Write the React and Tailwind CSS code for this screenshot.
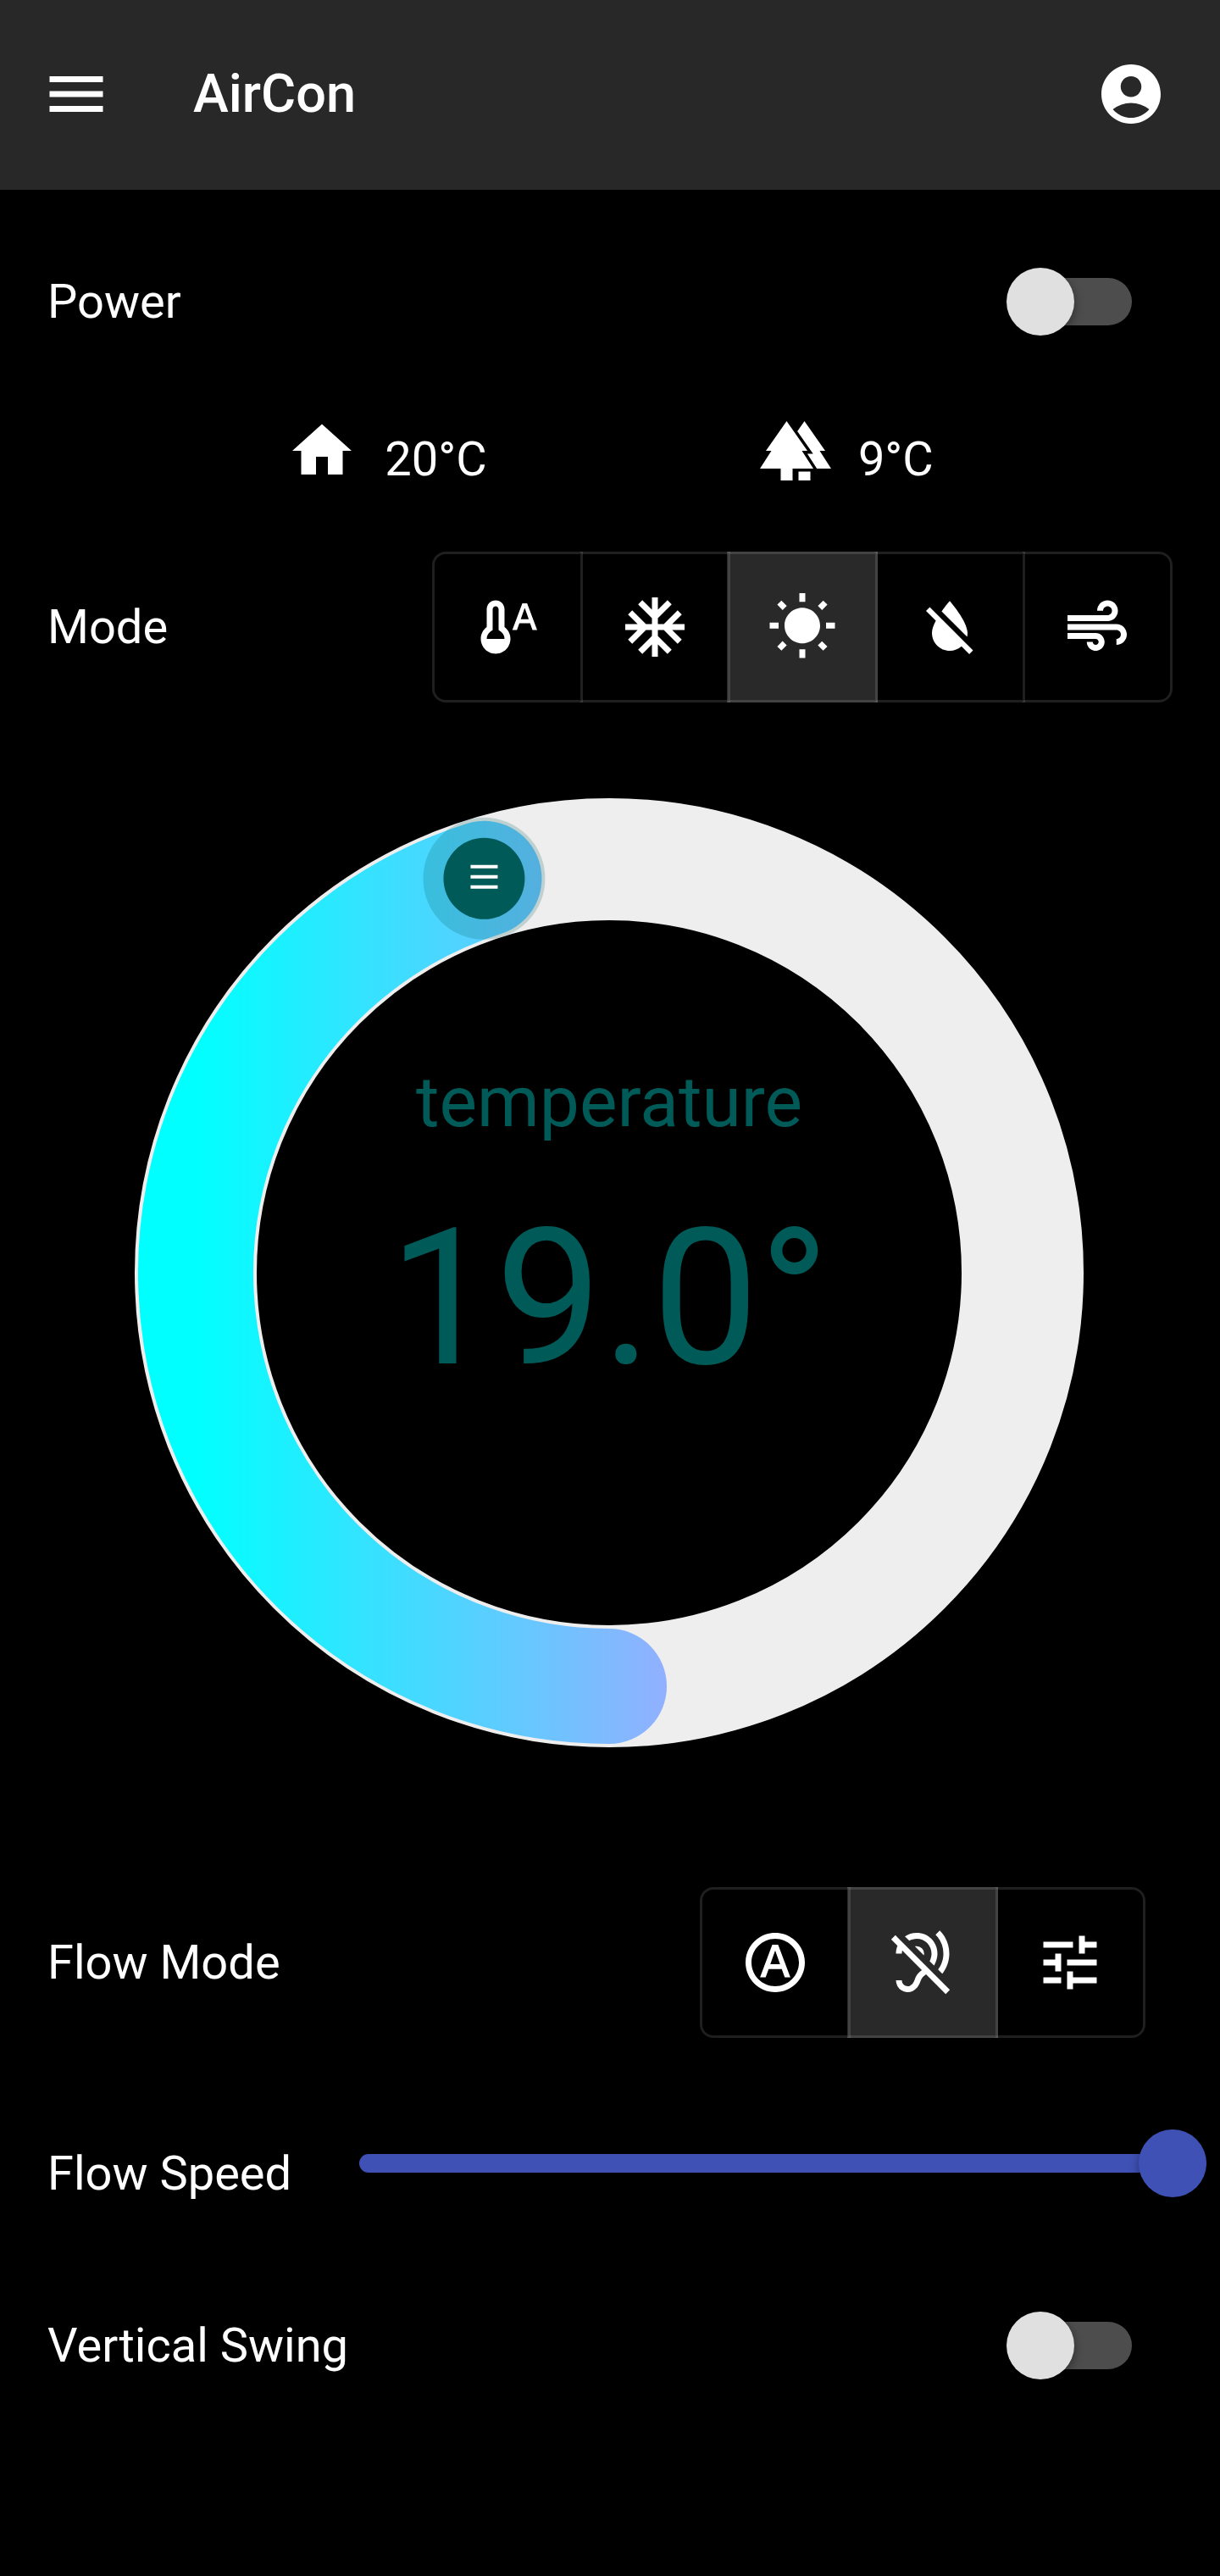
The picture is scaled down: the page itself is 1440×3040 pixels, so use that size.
import { useState } from "react";
import {
  MdAcUnit,
  MdAccountCircle,
  MdAir,
  MdForest,
  MdFormatColorReset,
  MdHearingDisabled,
  MdHome,
  MdMenu,
  MdOutlineHdrAuto,
  MdThermostatAuto,
  MdTune,
  MdWbSunny,
} from "react-icons/md";

const ICON = "size-[84px] shrink-0";

const MODES = [
  { id: "auto", label: "Automatic", Icon: MdThermostatAuto },
  { id: "cool", label: "Cool", Icon: MdAcUnit },
  { id: "heat", label: "Heat", Icon: MdWbSunny },
  { id: "dry", label: "Dry", Icon: MdFormatColorReset },
  { id: "fan", label: "Fan", Icon: MdAir },
];

const FLOW_MODES = [
  { id: "auto", label: "Automatic flow", Icon: MdOutlineHdrAuto },
  { id: "quiet", label: "Quiet", Icon: MdHearingDisabled },
  { id: "manual", label: "Manual", Icon: MdTune },
];

function ToggleGroup({ labelledBy, options, value, onChange }) {
  return (
    <div role="group" aria-labelledby={labelledBy} className="flex">
      {options.map(({ id, label, Icon }) => (
        <button
          key={id}
          type="button"
          aria-label={label}
          aria-pressed={value === id}
          onClick={() => onChange(id)}
          className={
            "-ml-1 border-[3px] border-l-transparent border-y-white/12 border-r-white/12 p-11 first:ml-0 first:rounded-l-2xl first:border-l-white/12 last:rounded-r-2xl " +
            (value === id ? "bg-white/16" : "")
          }
        >
          <Icon className={ICON} />
        </button>
      ))}
    </div>
  );
}

function SwitchRow({ id, label, checked, onChange }) {
  return (
    <div className="flex items-center justify-between py-[34px] pr-[104px] pl-14">
      <label htmlFor={id}>{label}</label>
      <input
        id={id}
        type="checkbox"
        role="switch"
        checked={checked}
        onChange={(e) => onChange(e.target.checked)}
        className="relative h-14 w-[136px] shrink-0 appearance-none rounded-full bg-[#4d4d4d] before:absolute before:-top-3 before:-left-3 before:size-20 before:rounded-full before:bg-[#e0e0e0] before:shadow-[0_4px_12px_rgba(0,0,0,0.4)] checked:bg-[#3f51b5] checked:before:left-17"
      />
    </div>
  );
}

const MIN = 16;
const MAX = 26;

/* Drawn in a 280-unit square: ring 36 wide, centre line at radius 122.
   The arc starts at the bottom and runs clockwise. */
function Dial({ value, onChange }) {
  const sweep = 54.4 + (value - MIN) * 36;
  const shown = Math.min(sweep, 359);
  const angle = ((90 + shown) * Math.PI) / 180;
  const x = 140 + 122 * Math.cos(angle);
  const y = 140 + 122 * Math.sin(angle);
  const large = shown > 180 ? 1 : 0;
  return (
    <div className="mx-auto grid w-[1120px] max-w-full">
      <svg viewBox="0 0 280 280" className="w-full [grid-area:1/1]" aria-hidden="true">
        <defs>
          <linearGradient id="progress" gradientUnits="userSpaceOnUse" x1="18" y1="0" x2="262" y2="0">
            <stop offset="0" stopColor="#00ffff" />
            <stop offset="1" stopColor="#ff74ff" />
          </linearGradient>
        </defs>
        <circle cx="140" cy="140" r="122" fill="none" stroke="#eeeeee" strokeWidth="36" />
        <path
          d={`M140 262A122 122 0 ${large} 1 ${x} ${y}`}
          fill="none"
          stroke="url(#progress)"
          strokeWidth="34"
          strokeLinecap="round"
        />
        <g transform={`translate(${x - 18} ${y - 18})`}>
          <circle cx="18" cy="18" r="18" fill="#005a58" fillOpacity="0.2" />
          <circle cx="18" cy="18" r="12" fill="#005a58" />
          <path d="M14 14h8v1h-8zM14 17h8v1h-8zM14 20h8v1h-8z" fill="#ffffff" />
        </g>
      </svg>
      <div className="flex flex-col items-center gap-11 pt-[303px] text-[#005a58] [grid-area:1/1]">
        <label htmlFor="temperature" className="text-[84px] leading-[112px]">
          temperature
        </label>
        <output htmlFor="temperature" className="text-[224px] leading-[264px]">
          {value.toFixed(1)}°
        </output>
        <input
          id="temperature"
          type="range"
          min={MIN}
          max={MAX}
          step="0.5"
          value={value}
          onChange={(e) => onChange(Number(e.target.value))}
          className="sr-only"
        />
      </div>
    </div>
  );
}

export default function App() {
  const [power, setPower] = useState(false);
  const [mode, setMode] = useState("heat");
  const [temperature, setTemperature] = useState(19);
  const [flowMode, setFlowMode] = useState("quiet");
  const [flowSpeed, setFlowSpeed] = useState(100);
  const [swing, setSwing] = useState(false);

  return (
    <div className="flex min-h-screen flex-col bg-black font-[Roboto,sans-serif] text-[56px] leading-[84px] text-white">
      <header className="flex h-56 items-center bg-[#282828] pr-[63px] pb-0.5 pl-12">
        <button type="button" aria-label="Menu">
          <MdMenu className={ICON} />
        </button>
        <h1 className="ml-24 flex-1 text-[63px] font-medium">AirCon</h1>
        <button type="button" aria-label="Account">
          <MdAccountCircle className={ICON} />
        </button>
      </header>

      <main className="flex flex-col pt-14">
        <SwitchRow id="power" label="Power" checked={power} onChange={setPower} />

        <div className="mt-[58px] flex justify-evenly px-4">
          <div className="flex items-end gap-8">
            <MdHome className={ICON + " mb-2.5"} title="Indoor" />
            <span>20°C</span>
          </div>
          <div className="flex items-end gap-8">
            <MdForest className={ICON + " mb-2.5"} title="Outdoor" />
            <span>9°C</span>
          </div>
        </div>

        <div className="mt-[67px] flex items-center justify-between px-14">
          <span id="mode-label">Mode</span>
          <ToggleGroup labelledBy="mode-label" options={MODES} value={mode} onChange={setMode} />
        </div>

        <div className="mt-[113px] pr-0.5">
          <Dial value={temperature} onChange={setTemperature} />
        </div>

        <div className="mt-[165px] flex items-center justify-between pr-22 pl-14">
          <span id="flow-mode-label">Flow Mode</span>
          <ToggleGroup
            labelledBy="flow-mode-label"
            options={FLOW_MODES}
            value={flowMode}
            onChange={setFlowMode}
          />
        </div>

        <div className="mt-27 flex items-end gap-20 pr-4 pl-14">
          <label htmlFor="flow-speed" className="shrink-0">
            Flow Speed
          </label>
          <input
            id="flow-speed"
            type="range"
            min="0"
            max="100"
            value={flowSpeed}
            onChange={(e) => setFlowSpeed(Number(e.target.value))}
            className="mb-3.5 h-20 min-w-0 flex-1 appearance-none bg-transparent [&::-webkit-slider-runnable-track]:h-[22px] [&::-webkit-slider-runnable-track]:rounded-full [&::-webkit-slider-runnable-track]:bg-[#3f51b5] [&::-webkit-slider-thumb]:-mt-[29px] [&::-webkit-slider-thumb]:size-20 [&::-webkit-slider-thumb]:appearance-none [&::-webkit-slider-thumb]:rounded-full [&::-webkit-slider-thumb]:bg-[#3f51b5] [&::-webkit-slider-thumb]:shadow-[0_4px_12px_rgba(0,0,0,0.4)]"
          />
        </div>

        <div className="mt-[85px]">
          <SwitchRow id="swing" label="Vertical Swing" checked={swing} onChange={setSwing} />
        </div>
      </main>
    </div>
  );
}
